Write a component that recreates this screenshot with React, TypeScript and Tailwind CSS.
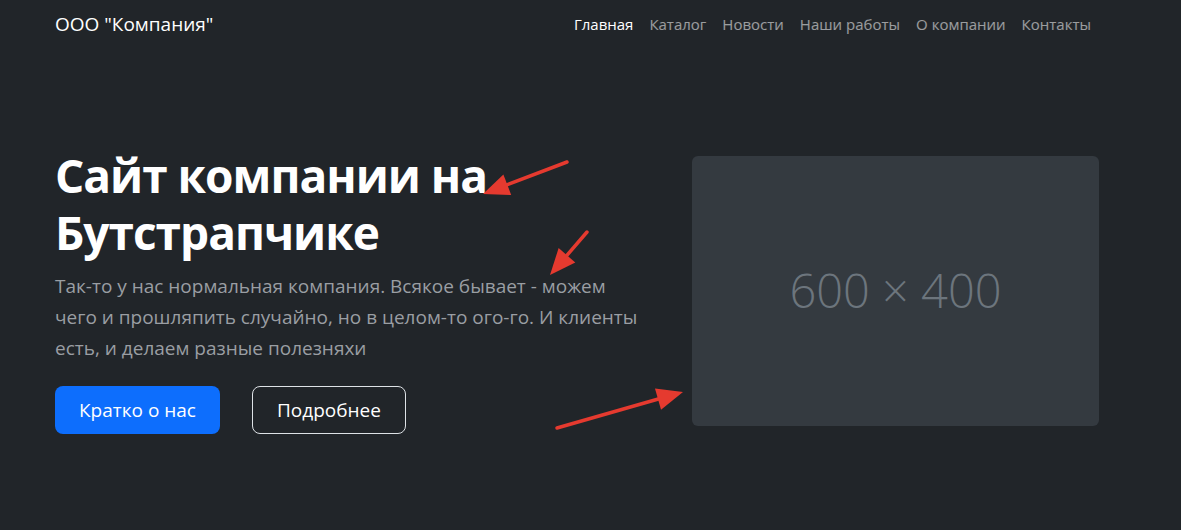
import React from "react";

const NAV = ["Главная", "Каталог", "Новости", "Наши работы", "О компании", "Контакты"];

function Arrows() {
  // red annotation arrows drawn over the screenshot
  const arrows = [
    { x1: 567, y1: 162, x2: 483, y2: 194 },
    { x1: 587, y1: 232, x2: 550, y2: 275 },
    { x1: 557, y1: 428, x2: 683, y2: 392 },
  ];
  return (
    <svg className="pointer-events-none absolute inset-0" width="1181" height="530" viewBox="0 0 1181 530">
      {arrows.map((a, i) => {
        const dx = a.x2 - a.x1;
        const dy = a.y2 - a.y1;
        const len = Math.hypot(dx, dy);
        const ux = dx / len;
        const uy = dy / len;
        const hl = 26;
        const hw = 11;
        const bx = a.x2 - ux * hl;
        const by = a.y2 - uy * hl;
        const p1 = `${bx - uy * hw},${by + ux * hw}`;
        const p2 = `${bx + uy * hw},${by - ux * hw}`;
        return (
          <g key={i}>
            <line x1={a.x1} y1={a.y1} x2={bx + ux * 4} y2={by + uy * 4} stroke="#e53a2f" strokeWidth="3.5" strokeLinecap="round" />
            <polygon points={`${a.x2},${a.y2} ${p1} ${p2}`} fill="#e53a2f" />
          </g>
        );
      })}
    </svg>
  );
}

export default function App() {
  return (
    <div className="relative min-h-[530px] w-[1181px] bg-[#212529] font-['Open_Sans',sans-serif] text-white">
      {/* Navbar */}
      <nav className="box-content flex h-12 w-[1044px] items-center justify-between pl-[55px]">
        <a className="text-[19px] text-white">ООО "Компания"</a>
        <ul className="flex items-center gap-4 pr-2 text-[15px]">
          {NAV.map((item, i) => (
            <li key={item}>
              <a className={i === 0 ? "text-white" : "text-white/55"}>{item}</a>
            </li>
          ))}
        </ul>
      </nav>

      {/* Hero */}
      <section className="box-content flex w-[1044px] items-center justify-between pl-[55px] pt-[99px]">
        <div className="w-[592px]">
          <h1 className="mb-2.5 text-[46px] font-bold leading-[57px] tracking-[-1px]">
            Сайт компании на
            <br />
            Бутстрапчике
          </h1>
          <p className="mb-[22px] text-[19px] leading-[31px] text-[#9a9ea3]">
            Так-то у нас нормальная компания. Всякое бывает - можем чего и прошляпить случайно, но в целом-то ого-го. И клиенты есть, и делаем разные полезняхи
          </p>
          <div className="flex gap-8">
            <button className="h-12 rounded-lg bg-[#0d6efd] px-6 text-[19px] text-white">Кратко о нас</button>
            <button className="h-12 rounded-lg border border-[#dee2e6] px-6 text-[19px] text-white">Подробнее</button>
          </div>
        </div>
        <div className="flex h-[270px] w-[407px] items-center justify-center rounded-md bg-[#343a40]">
          <span className="text-[47px] font-light text-[#6c757d]">600 × 400</span>
        </div>
      </section>

      <Arrows />
    </div>
  );
}
